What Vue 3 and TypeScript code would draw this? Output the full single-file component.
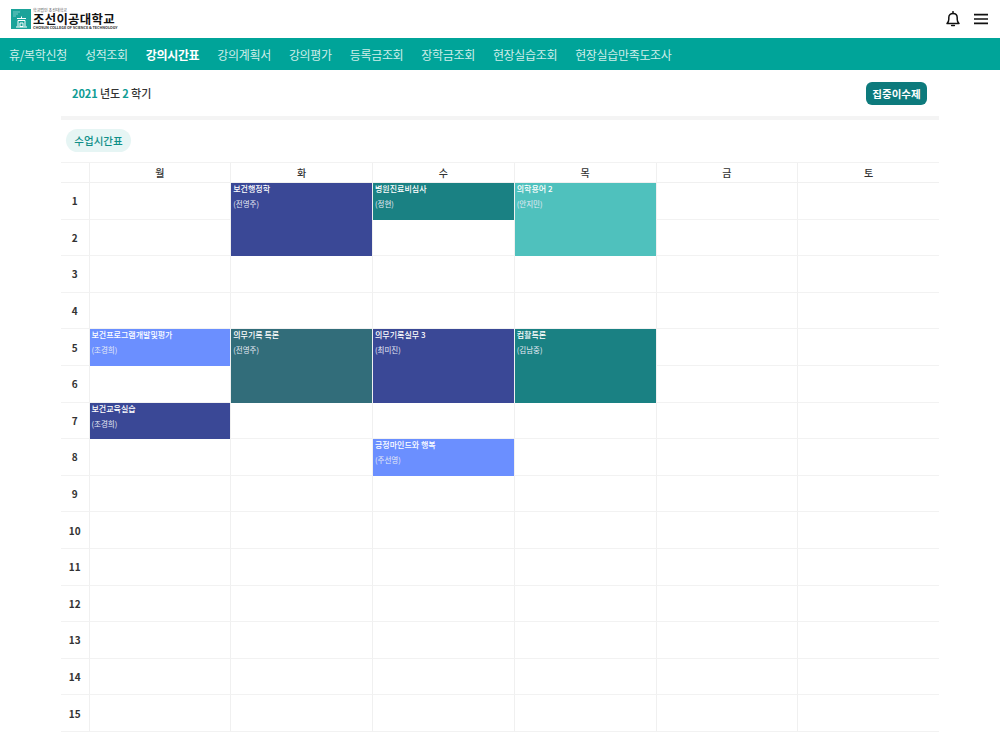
<script setup lang="ts">
interface Lecture {
  title: string
  teacher: string
  day: number
  start: number
  span: number
  color: string
}

const navItems: string[] = ['휴/복학신청', '성적조회', '강의시간표', '강의계획서', '강의평가', '등록금조회', '장학금조회', '현장실습조회', '현장실습만족도조사']
const days: string[] = ['월', '화', '수', '목', '금', '토']
const periods: number[] = Array.from({ length: 15 }, (_, i) => i + 1)

const lectures: Lecture[] = [
  { title: '보건행정학', teacher: '(전영주)', day: 1, start: 1, span: 2, color: '#3a4896' },
  { title: '병원진료비심사', teacher: '(정현)', day: 2, start: 1, span: 1, color: '#1a8183' },
  { title: '의학용어 2', teacher: '(안지민)', day: 3, start: 1, span: 2, color: '#4fc1bd' },
  { title: '보건프로그램개발및평가', teacher: '(조경희)', day: 0, start: 5, span: 1, color: '#6b8fff' },
  { title: '의무기록 특론', teacher: '(전영주)', day: 1, start: 5, span: 2, color: '#326d7a' },
  { title: '의무기록실무 3', teacher: '(최미진)', day: 2, start: 5, span: 2, color: '#3a4896' },
  { title: '컴활특론', teacher: '(김남중)', day: 3, start: 5, span: 2, color: '#1a8183' },
  { title: '보건교육실습', teacher: '(조경희)', day: 0, start: 7, span: 1, color: '#3a4896' },
  { title: '긍정마인드와 행복', teacher: '(주선영)', day: 2, start: 8, span: 1, color: '#6b8fff' }
]

function place(day: number, start: number, span: number): Record<string, string> {
  return { gridColumn: String(day + 2), gridRow: `${start + 1} / span ${span}` }
}
</script>

<template>
  <div class="page">
    <header class="top">
      <div class="logo">
        <svg class="mark" width="20" height="20" viewBox="0 0 20 20">
          <rect width="20" height="20" fill="#1ba39a" />
          <path d="M2 3h7M2 5h5M2 7h3" stroke="#8fd6d0" stroke-width="0.8" />
          <path d="M10.5 7.5v2M6 9.5h9M7 11.5h7M7 11.5v6M14 11.5v6M9 14h3v3.5h-3zM5 18h11" stroke="#fff" stroke-width="1" fill="none" />
        </svg>
        <div class="logo-text">
          <span class="logo-small">학교법인 조선대학교</span>
          <span class="logo-main">조선이공대학교</span>
          <span class="logo-en">CHOSUN COLLEGE OF SCIENCE &amp; TECHNOLOGY</span>
        </div>
      </div>
      <div class="top-icons">
        <svg width="16" height="16" viewBox="0 0 16 16" fill="none" stroke="#111" stroke-width="1.5">
          <path d="M2 12.6h12c-1.3-1.2-1.8-2.4-1.8-4.4V6.6C12.2 4 10.4 2.4 8 2.4S3.8 4 3.8 6.6v1.6c0 2-.5 3.2-1.8 4.4z" stroke-linejoin="round" />
          <path d="M8 .6v1.8M6.6 14.6h2.8" stroke-linecap="round" />
        </svg>
        <svg width="14" height="12" viewBox="0 0 14 12" fill="none" stroke="#111" stroke-width="1.6">
          <path d="M0 1.6h14M0 6h14M0 10.4h14" />
        </svg>
      </div>
    </header>

    <nav class="nav">
      <a v-for="item in navItems" :key="item" class="nav-item" :class="{ active: item === '강의시간표' }">{{ item }}</a>
    </nav>

    <main class="content">
      <div class="term">
        <p class="term-label"><b>2021</b> 년도 <b>2</b> 학기</p>
        <button class="btn" type="button">집중이수제</button>
      </div>

      <div class="tab-row"><span class="tab">수업시간표</span></div>

      <div class="grid">
        <div class="head corner"></div>
        <div v-for="d in days" :key="d" class="head">{{ d }}</div>
        <template v-for="p in periods" :key="p">
          <div class="period" :style="place(-1, p, 1)">{{ p }}</div>
          <div v-for="(d, i) in days" :key="d + p" class="cell" :style="place(i, p, 1)"></div>
        </template>
        <div
          v-for="l in lectures"
          :key="l.title"
          class="lecture"
          :style="{ ...place(l.day, l.start, l.span), backgroundColor: l.color }"
        >
          <span class="lec-title">{{ l.title }}</span>
          <span class="lec-teacher">{{ l.teacher }}</span>
        </div>
      </div>
    </main>
  </div>
</template>

<style>
html, body { background: #fff; }
</style>

<style scoped>
.page {
  width: 1000px;
  height: 750px;
  overflow: hidden;
  font-family: "Noto Sans CJK KR", "Noto Sans", sans-serif;
  color: #222;
  background: #fff;
}
.top {
  height: 38px;
  display: flex;
  align-items: center;
  justify-content: space-between;
  padding: 0 12px 0 11px;
  box-sizing: border-box;
}
.logo { display: flex; align-items: center; gap: 2px; }
.mark { display: block; }
.logo-text { display: flex; flex-direction: column; line-height: 1; width: 82px; }
.logo-small { font-size: 4px; height: 5px; line-height: 5px; color: #555; }
.logo-main { font-size: 12.4px; height: 12px; line-height: 12px; font-weight: 700; color: #111; letter-spacing: 0.3px; white-space: nowrap; }
.logo-en { font-size: 3.8px; height: 5px; line-height: 5px; color: #333; white-space: nowrap; font-weight: 700; letter-spacing: -0.08px; }
.top-icons { display: flex; align-items: center; gap: 13px; }
.top-icons svg { display: block; }
.nav {
  height: 32px;
  background: #00a499;
  display: flex;
  align-items: center;
  gap: 18px;
  padding: 0 9px;
}
.nav-item { font-size: 12px; color: #cfeeea; white-space: nowrap; letter-spacing: -0.33px; }
.nav-item.active { color: #fff; font-weight: 700; }
.content { padding: 0 61px; }
.term {
  height: 46px;
  border-bottom: 4px solid #f4f4f4;
  display: flex;
  align-items: center;
  justify-content: space-between;
  padding: 0 12px 0 11px;
}
.term-label { margin: 0; font-size: 11px; color: #333; font-weight: 500; letter-spacing: -0.1px; }
.term-label b { color: #0f9c94; font-weight: 700; }
.btn {
  height: 23px;
  width: 61px;
  padding: 0;
  border: 0;
  border-radius: 6px;
  background: #0d7a7c;
  color: #fff;
  font: 700 10.5px "Noto Sans CJK KR", sans-serif;
}
.tab-row { padding: 6px 0 0 5px; height: 36px; box-sizing: border-box; margin-top: 0; height: 42px; }
.tab {
  display: inline-flex;
  align-items: center;
  justify-content: center;
  width: 65px;
  height: 23px;
  border-radius: 12px;
  background: #e6f5f4;
  color: #0f8f88;
  font-size: 10.5px;
  font-weight: 500;
}
.grid {
  display: grid;
  grid-template-columns: 27.5px repeat(6, 1fr);
  grid-template-rows: 20px repeat(15, 36.6px);
  border-top: 1px solid #f2f2f2;
}
.head {
  display: flex;
  align-items: center;
  justify-content: center;
  font-size: 10px;
  font-weight: 500;
  color: #333;
  border-left: 1px solid #f0f0f0;
  border-bottom: 1px solid #f0f0f0;
}
.head.corner { border-left: 0; }
.period {
  display: flex;
  align-items: center;
  justify-content: center;
  font-size: 10px;
  font-weight: 700;
  color: #333;
  border-bottom: 1px solid #f2f2f2;
}
.cell {
  border-left: 1px solid #f0f0f0;
  border-bottom: 1px solid #f2f2f2;
}
.lecture {
  display: flex;
  flex-direction: column;
  align-items: flex-start;
  margin-left: 1px;
  padding: 0 2px;
  min-width: 0;
  color: #fff;
  overflow: hidden;
}
.lec-title { font-size: 8px; font-weight: 500; line-height: 12px; white-space: nowrap; }
.lec-teacher { font-size: 7.5px; line-height: 18px; white-space: nowrap; color: #e6eaf5; }
</style>
